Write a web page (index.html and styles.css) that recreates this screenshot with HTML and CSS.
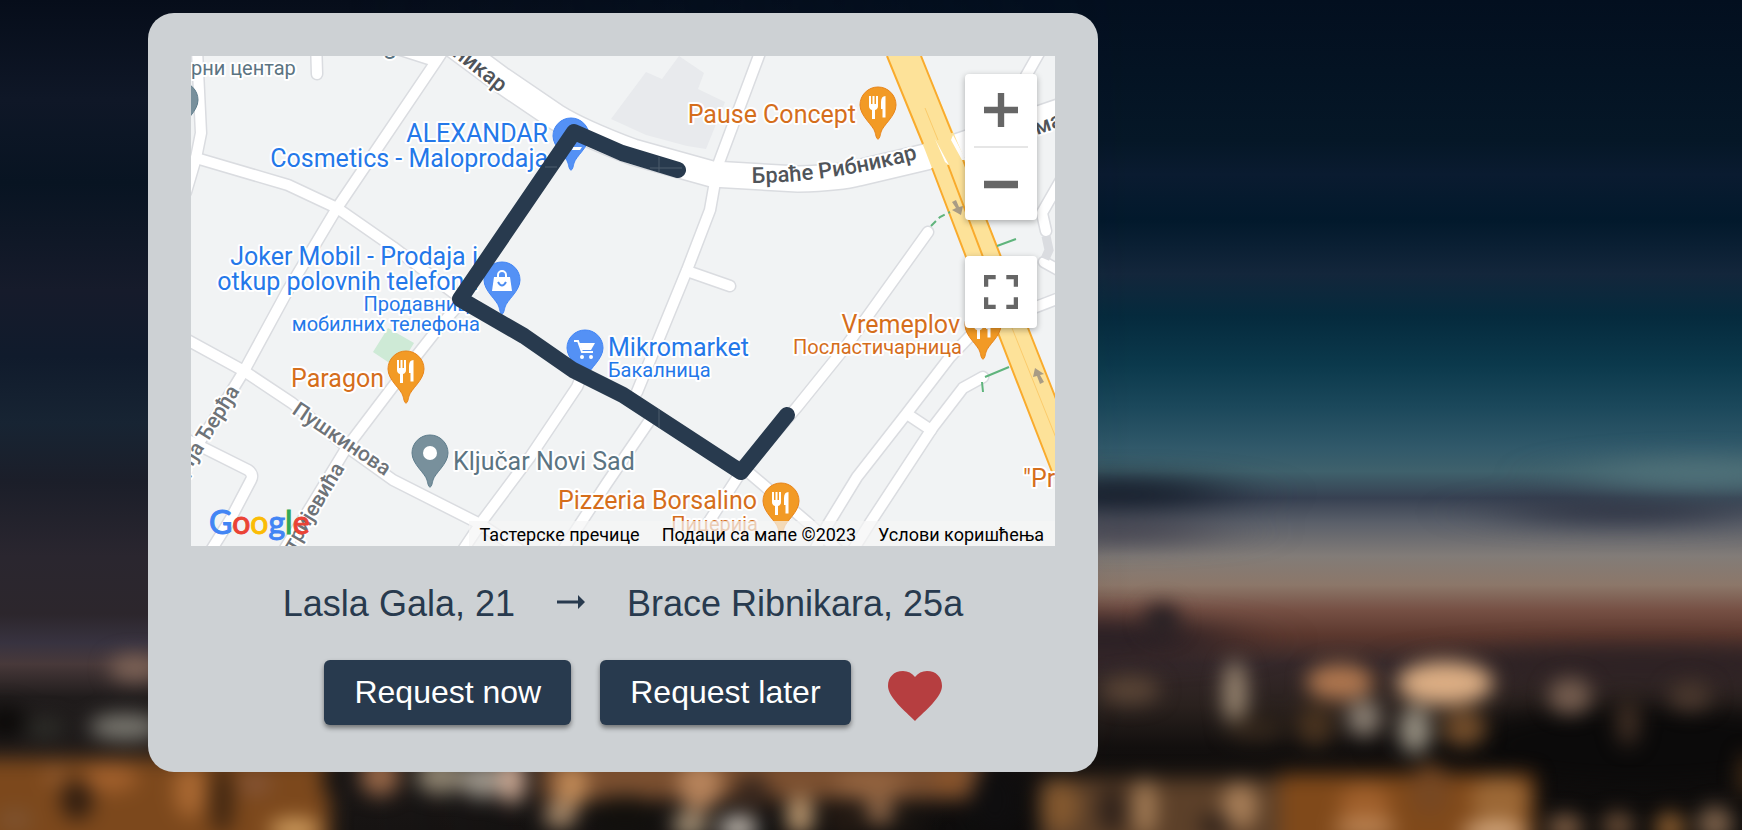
FILE: index.html
```html
<!DOCTYPE html>
<html lang="en">
<head>
<meta charset="utf-8">
<meta name="viewport" content="width=device-width, initial-scale=1">
<title>Request a ride</title>
<link rel="stylesheet" href="styles.css">
</head>
<body>
<svg class="backdrop" viewBox="0 0 1742 830" preserveAspectRatio="none" aria-hidden="true">
  <defs>
    <linearGradient id="dusk" x1="0" y1="0" x2="0" y2="1">
      <stop offset="0" stop-color="#060d1a"/><stop offset=".12" stop-color="#0f1727"/><stop offset=".22" stop-color="#081422"/>
      <stop offset=".35" stop-color="#161b2b"/><stop offset=".43" stop-color="#101b2c"/><stop offset=".51" stop-color="#172433"/>
      <stop offset=".58" stop-color="#1b1e29"/><stop offset=".67" stop-color="#2a262f"/><stop offset=".74" stop-color="#2c262c"/>
      <stop offset=".775" stop-color="#383340"/><stop offset=".8" stop-color="#48393a"/><stop offset=".84" stop-color="#201c1c"/>
      <stop offset="1" stop-color="#171413"/>
    </linearGradient>
    <linearGradient id="sky" x1="0" y1="0" x2="0" y2="1">
      <stop offset="0" stop-color="#030f1f"/><stop offset=".17" stop-color="#051727"/><stop offset=".21" stop-color="#0a1b30"/>
      <stop offset=".265" stop-color="#02192c"/><stop offset=".33" stop-color="#13263b"/><stop offset=".38" stop-color="#052a3d"/>
      <stop offset=".44" stop-color="#0b394c"/><stop offset=".49" stop-color="#1b485b"/><stop offset=".54" stop-color="#31596a"/>
      <stop offset=".568" stop-color="#3f616c"/><stop offset=".6" stop-color="#374152"/><stop offset=".63" stop-color="#5b606a"/>
      <stop offset=".67" stop-color="#827c78"/><stop offset=".705" stop-color="#8c7769"/><stop offset=".735" stop-color="#765044"/>
      <stop offset=".765" stop-color="#5c382e"/><stop offset=".8" stop-color="#35282a"/><stop offset=".85" stop-color="#2a211e"/>
      <stop offset=".9" stop-color="#120f0e"/><stop offset="1" stop-color="#0c0b0b"/>
    </linearGradient>
    <linearGradient id="fade" x1="0" y1="0" x2="1" y2="0" color-interpolation="sRGB">
      <stop offset=".2" stop-color="#000"/><stop offset=".65" stop-color="#fff"/>
    </linearGradient>
    <mask id="east"><rect width="1742" height="830" fill="url(#fade)"/></mask>
    <filter id="soft" x="-10%" y="-50%" width="120%" height="200%" color-interpolation-filters="sRGB"><feGaussianBlur stdDeviation="10"/></filter>
    <filter id="softer" x="-20%" y="-50%" width="140%" height="200%" color-interpolation-filters="sRGB"><feGaussianBlur stdDeviation="40 12"/></filter>
  </defs>
  <rect width="1742" height="830" fill="url(#dusk)"/>
  <rect width="1742" height="830" fill="url(#sky)" mask="url(#east)"/>
  <g filter="url(#softer)">
    <ellipse cx="1120" cy="493" rx="110" ry="16" fill="#161e2b"/>
    <ellipse cx="1620" cy="512" rx="120" ry="11" fill="#2b3040"/>
    <ellipse cx="1700" cy="475" rx="120" ry="16" fill="#50727a"/>
    <ellipse cx="1100" cy="640" rx="130" ry="22" fill="#2a2025"/>
    <ellipse cx="1120" cy="532" rx="100" ry="11" fill="#3f3e4b"/>
    <ellipse cx="1640" cy="664" rx="200" ry="16" fill="#2d2123"/>
    <ellipse cx="1640" cy="745" rx="200" ry="40" fill="#0b0a0a"/>
  </g>
  <g filter="url(#soft)">
    <ellipse cx="1162" cy="620" rx="18" ry="16" fill="#262024"/>
    <ellipse cx="1235" cy="694" rx="12" ry="34" fill="#9a8772"/>
    <ellipse cx="1340" cy="682" rx="34" ry="18" fill="#b0774f"/>
    <ellipse cx="1445" cy="683" rx="48" ry="22" fill="#dcae84"/>
    <ellipse cx="1364" cy="718" rx="17" ry="18" fill="#8b8074"/>
    <ellipse cx="1415" cy="730" rx="16" ry="24" fill="#968f81"/>
    <ellipse cx="1464" cy="728" rx="22" ry="18" fill="#744e2b"/>
    <ellipse cx="1315" cy="725" rx="18" ry="20" fill="#49331f"/>
    <ellipse cx="1570" cy="696" rx="22" ry="18" fill="#755d4f"/>
    <ellipse cx="1690" cy="696" rx="22" ry="15" fill="#4a382e"/>
    <ellipse cx="1628" cy="722" rx="12" ry="24" fill="#3f2e24"/>
    <ellipse cx="1130" cy="690" rx="30" ry="14" fill="#5a4536"/>
    <ellipse cx="1255" cy="728" rx="30" ry="12" fill="#33261b"/>
    <ellipse cx="135" cy="668" rx="26" ry="13" fill="#806558"/>
    <ellipse cx="125" cy="727" rx="36" ry="13" fill="#7c7a72"/>
    <ellipse cx="5" cy="722" rx="22" ry="16" fill="#0c0a09"/>
    <ellipse cx="45" cy="728" rx="20" ry="10" fill="#2e2e29"/>
    <rect x="-40" y="758" width="370" height="110" fill="#7c481c"/>
    <ellipse cx="110" cy="778" rx="28" ry="14" fill="#a2602c"/>
    <ellipse cx="55" cy="776" rx="12" ry="10" fill="#90592d"/>
    <ellipse cx="77" cy="800" rx="16" ry="20" fill="#301d10"/>
    <ellipse cx="15" cy="820" rx="18" ry="10" fill="#7d5432"/>
    <ellipse cx="190" cy="790" rx="16" ry="28" fill="#a96832"/>
    <ellipse cx="222" cy="800" rx="12" ry="36" fill="#402611"/>
    <ellipse cx="255" cy="784" rx="16" ry="10" fill="#85563a"/>
    <ellipse cx="295" cy="830" rx="26" ry="12" fill="#cf9d5f"/>
    <ellipse cx="334" cy="778" rx="12" ry="20" fill="#171413"/>
    <ellipse cx="380" cy="776" rx="20" ry="20" fill="#966647"/>
    <ellipse cx="440" cy="776" rx="24" ry="18" fill="#8e8370"/>
    <ellipse cx="482" cy="780" rx="22" ry="18" fill="#9c958a"/>
    <ellipse cx="512" cy="780" rx="14" ry="24" fill="#c9a691"/>
    <rect x="540" y="755" width="440" height="44" fill="#7c5030"/>
    <ellipse cx="572" cy="786" rx="16" ry="22" fill="#c28b58"/>
    <ellipse cx="560" cy="815" rx="16" ry="14" fill="#a78a6c"/>
    <ellipse cx="625" cy="815" rx="32" ry="20" fill="#12100d"/>
    <ellipse cx="700" cy="785" rx="22" ry="26" fill="#b6835b"/>
    <ellipse cx="690" cy="825" rx="18" ry="14" fill="#a28f75"/>
    <ellipse cx="752" cy="792" rx="18" ry="18" fill="#3a281e"/>
    <ellipse cx="738" cy="828" rx="20" ry="13" fill="#c0b8af"/>
    <ellipse cx="800" cy="816" rx="14" ry="20" fill="#bb9870"/>
    <ellipse cx="845" cy="822" rx="20" ry="12" fill="#281c14"/>
    <ellipse cx="870" cy="785" rx="36" ry="16" fill="#93633f"/>
    <ellipse cx="880" cy="812" rx="14" ry="14" fill="#8b6547"/>
    <ellipse cx="950" cy="780" rx="14" ry="14" fill="#8c552a"/>
    <ellipse cx="910" cy="822" rx="14" ry="12" fill="#1a1511"/>
    <ellipse cx="995" cy="800" rx="24" ry="34" fill="#0f0e0f"/>
    <rect x="1040" y="778" width="240" height="80" fill="#5c4029"/>
    <ellipse cx="1060" cy="806" rx="20" ry="26" fill="#83582f"/>
    <ellipse cx="1112" cy="810" rx="14" ry="24" fill="#30221a"/>
    <ellipse cx="1145" cy="808" rx="12" ry="30" fill="#a27b55"/>
    <ellipse cx="1240" cy="806" rx="18" ry="24" fill="#a67d57"/>
    <ellipse cx="1215" cy="826" rx="16" ry="12" fill="#30221a"/>
    <rect x="1280" y="774" width="254" height="84" fill="#80491a"/>
    <ellipse cx="1365" cy="805" rx="26" ry="20" fill="#a0602c"/>
    <ellipse cx="1365" cy="828" rx="32" ry="9" fill="#c08a5b"/>
    <ellipse cx="1430" cy="790" rx="20" ry="26" fill="#774822"/>
    <ellipse cx="1500" cy="800" rx="30" ry="22" fill="#9c6836"/>
    <ellipse cx="1495" cy="832" rx="34" ry="10" fill="#dbb188"/>
    <ellipse cx="1565" cy="828" rx="18" ry="14" fill="#7d5c42"/>
    <ellipse cx="1618" cy="826" rx="16" ry="14" fill="#6b4e37"/>
    <ellipse cx="1670" cy="828" rx="15" ry="16" fill="#8b5d2f"/>
    <ellipse cx="1715" cy="824" rx="18" ry="18" fill="#7b6049"/>
    <ellipse cx="1746" cy="775" rx="6" ry="22" fill="#5a3a1c"/>
  </g>
</svg>

<main class="card">
  <section class="map" aria-label="Route map">
    <svg class="map-canvas" viewBox="191 56 864 490" role="img" aria-label="Route from Lasla Gala to Brace Ribnikara">
      <defs>
        <path id="pin" d="M0 34C-1.500 34-2 31-3 27C-5 20-18 11-18 0A18 18 0 0 1 18 0C18 11 5 20 3 27C2 31 1.500 34 0 34Z"/>
        <g id="cutlery" fill="#fff">
          <path d="M-9-9h2v8h1.500v-8h2v8H-2v-8h2v10q0 3-3 4v9h-3v-9q-3-1-3-4Z"/>
          <path d="M3-3Q3-9 7.500-9V12.500h-3V4H3Z"/>
        </g>
        <g id="roads">
          <path d="M197 50L201 133L196 158L186 192"/>
          <path d="M316 40L317 74"/>
          <path d="M196 158L288 185L337 208L393 247L463 300"/>
          <path d="M385 45L432 60"/>
          <path d="M450 40L437 60L337 208L288 290L244 371L217 415L180 472"/>
          <path d="M764 42L718 165L710 210L687 270L637 392"/>
          <path d="M687 271L730 286"/>
          <path d="M650 420L607 483L563 550"/>
          <path d="M928 232L847 345L797 407L741 472L710 520L690 550"/>
          <path d="M741 466L807 522L838 550"/>
          <path d="M983 327L972 334L950 357L907 413L857 477L827 526L814 552"/>
          <path d="M983 377L963 388L933 427L870 523L853 550"/>
          <path d="M907 414L931 430"/>
          <path d="M180 336L244 371L292 403L347 447L393 480L480 524L520 550"/>
          <path d="M463 300L440 326L410 364L347 447L313 503L284 550"/>
          <path d="M580 380L577 387L530 457L483 520L463 550"/>
          <path d="M180 436L248 470Q254 474 251 480L230 520L210 552"/>
          <path d="M1043 46L1026 76L1000 130"/>
          <path d="M1062 178L1042 213L1046 231"/>
          <path d="M1044 262L1062 272"/>
          <path d="M1010 317L1062 297"/>
        </g>
        <path id="avenue" d="M450 42L500 79L556 117Q580 132 633 152L712 174L798 179Q840 178 858 173L930 156L1062 111"/>
        <path id="lbl-ribnikar" d="M752 183C800 183 860 176 935 154"/>
      </defs>

      <rect class="land" x="191" y="56" width="864" height="490"/>
      <path fill="#e8eaed" d="M611 119L646 72L662 79L679 56L704 73L698 89L725 102L706 149L687 146L646 135Z"/>
      <path fill="#ceead6" d="M373 352L388 328L414 343L400 366L388 362Z"/>

      <use href="#roads" class="road-edge"/>
      <use href="#avenue" class="avenue-edge"/>
      <use href="#roads" class="road"/>
      <use href="#avenue" class="avenue"/>
      <path d="M1046 236L1049 250L1045 259" fill="none" stroke="#dadce0" stroke-width="9"/>

      <path fill="#fde299" d="M887 56H921L965 160L1001 257L1028 328L1060 410V492L998 333L966 257L925 150Z"/>
      <g class="highway-line">
        <path d="M887 56L923 144M932 168L966 257L998 333L1054 477"/>
        <path d="M921 56L952 133M963 160L1001 257L1028 328L1058 404"/>
        <path d="M948 165L983 257L1000 300"/>
        <path class="thin" d="M1000 300L1012 328L1056 438M925 108L938 140"/>
      </g>
      <path fill="#fff" d="M935 139L949 165L945 162ZM953 135L966 160H962L951 140Z"/>
      <g fill="none" stroke="#5fb47c" stroke-width="2">
        <path d="M931 226L940 217L950 212" stroke-dasharray="7 4"/>
        <path d="M997 246L1016 239M985 377L1009 367M982 382L983 392"/>
      </g>
      <g fill="#a99c85">
        <path d="M952 202L956 200L959 207L963 206L961 215L952 210L956 208Z"/>
        <path d="M1044 382L1040 384L1037 376L1033 377L1035 368L1044 374L1040 375Z"/>
      </g>

      <use href="#pin" x="571" y="136" class="pin-blue"/>
      <path fill="#fff" d="M573 147h9l-2 3h-8Z"/>
      <use href="#pin" x="502" y="280" class="pin-blue"/>
      <g transform="translate(502 280)"><path fill="#fff" d="M-8-3H8L10 11H-10Z"/><path d="M-4-3V-5a4 4 0 0 1 8 0v2" fill="none" stroke="#fff" stroke-width="2"/><path d="M-4 2q4 7 8 0" fill="none" stroke="#4d8df0" stroke-width="2"/></g>
      <use href="#pin" x="585" y="348" class="pin-blue"/>
      <g transform="translate(585 348)"><path d="M-11-7h4L-3 4H8" fill="none" stroke="#fff" stroke-width="2"/><path fill="#fff" d="M-6-5H10L6 2H-3Z"/><circle cx="-3" cy="9" r="2" fill="#fff"/><circle cx="6" cy="9" r="2" fill="#fff"/></g>
      <use href="#pin" x="878" y="105" class="pin-orange"/><use href="#cutlery" x="878" y="105"/>
      <use href="#pin" x="406" y="369" class="pin-orange"/><use href="#cutlery" x="406" y="369"/>
      <use href="#pin" x="983" y="325" class="pin-orange"/><use href="#cutlery" x="983" y="325"/>
      <use href="#pin" x="781" y="501" class="pin-orange"/><use href="#cutlery" x="781" y="501"/>
      <use href="#pin" x="430" y="453" class="pin-slate"/><circle cx="430" cy="453" r="7" fill="#fff"/>
      <use href="#pin" x="180" y="100" class="pin-slate"/>

      <g class="street">
        <text class="strong" text-anchor="end" transform="translate(500 93) rotate(38)">Рибникар</text>
        <text class="strong"><textPath href="#lbl-ribnikar">Браће Рибникар</textPath></text>
        <text class="strong" transform="translate(1037 135) rotate(-19)">ма</text>
        <text class="soft" transform="translate(291 413) rotate(34)">Пушкинова</text>
        <text class="soft" text-anchor="end" transform="translate(240 391) rotate(-58)">Карађорђа Ђерђа</text>
        <text class="soft" text-anchor="end" transform="translate(345 468) rotate(-59)">Димитријевића</text>
      </g>
      <g class="poi slate">
        <text class="small" x="191" y="75">рни центар</text>
        <text x="383" y="54">g</text>
        <text x="453" y="470">Ključar Novi Sad</text>
      </g>
      <g class="poi blue">
        <text x="548" y="142" text-anchor="end">ALEXANDAR</text>
        <text x="548" y="167" text-anchor="end">Cosmetics - Maloprodaja</text>
        <text x="478" y="265" text-anchor="end">Joker Mobil - Prodaja i</text>
        <text x="478" y="290" text-anchor="end">otkup polovnih telefona</text>
        <text class="small" x="480" y="311" text-anchor="end">Продавница</text>
        <text class="small" x="480" y="331" text-anchor="end">мобилних телефона</text>
        <text x="608" y="356">Mikromarket</text>
        <text class="small" x="608" y="377">Бакалница</text>
      </g>
      <g class="poi orange">
        <text x="856" y="123" text-anchor="end">Pause Concept</text>
        <text x="384" y="387" text-anchor="end">Paragon</text>
        <text x="960" y="333" text-anchor="end">Vremeplov</text>
        <text class="small" x="962" y="354" text-anchor="end">Посластичарница</text>
        <text x="757" y="509" text-anchor="end">Pizzeria Borsalino</text>
        <text class="small" x="758" y="531" text-anchor="end">Пицерија</text>
        <text x="1023" y="487">"Pr</text>
      </g>

      <path class="route" d="M678 170L622 153L574 132L460 299L524 336L573 370L623 395L741 472L787 415"/>
      <path class="seam" d="M659 157V172M650 168H682M659 409V428M545 167H557"/>
    </svg>

    <a class="google" href="#google" aria-label="Google"><span class="b">G</span><span class="r">o</span><span class="y">o</span><span class="b">g</span><span class="g">l</span><span class="r">e</span></a>

    <div class="controls">
      <div class="zoom">
        <button type="button" aria-label="Zoom in"><svg viewBox="0 0 32 32"><path d="M13 0h6v13h13v6H19v13h-6V19H0v-6h13Z"/></svg></button>
        <button type="button" aria-label="Zoom out"><svg viewBox="0 0 32 32"><path d="M0 13h32v7H0Z"/></svg></button>
      </div>
      <button type="button" class="fullscreen" aria-label="Full screen"><svg viewBox="0 0 32 32"><path d="M0 0H11V4H4V11H0ZM21 0H32V11H28V4H21ZM0 21H4V28H11V32H0ZM28 21H32V32H21V28H28Z"/></svg></button>
    </div>

    <div class="legal">
      <button type="button">Тастерске пречице</button>
      <span>Подаци са мапе ©2023</span>
      <a href="#terms">Услови коришћења</a>
    </div>
  </section>

  <h1 class="trip">
    <span>Lasla Gala, 21</span>
    <svg class="arrow" viewBox="0 0 28 14" aria-label="to"><path d="M0 5.500H21V0L28 7L21 14V8.500H0Z"/></svg>
    <span>Brace Ribnikara, 25a</span>
  </h1>

  <div class="actions">
    <button type="button" class="request">Request now</button>
    <button type="button" class="request">Request later</button>
    <button type="button" class="favorite" aria-label="Add to favorites"><svg viewBox="0 0 54 50"><path d="M27 50C17 40 0 26 0 15C0 6 6 0 15 0C20 0 24 2 27 6C30 2 34 0 39 0C48 0 54 6 54 15C54 26 37 40 27 50Z"/></svg></button>
  </div>
</main>
</body>
</html>
```
FILE: styles.css
```css
* { box-sizing: border-box; }

body {
  margin: 0;
  min-height: 100vh;
  background: #0c0b0b;
  font-family: "Liberation Sans", Arial, sans-serif;
  color: #283a4e;
}

button {
  border: 0;
  padding: 0;
  background: none;
  font: inherit;
  color: inherit;
  cursor: pointer;
}

.backdrop {
  position: fixed;
  inset: 0;
  width: 100%;
  height: 100%;
  z-index: -1;
}

.card {
  max-width: 950px;
  margin: 13px 0 58px 148px;
  padding: 43px 43px 47px;
  border-radius: 26px;
  background: #cdd1d4;
}

/* map */
.map {
  position: relative;
  overflow: hidden;
  font-family: Roboto, sans-serif;
}

.map-canvas { display: block; width: 100%; }

.land { fill: #f1f3f4; }

.road-edge, .road, .avenue-edge, .avenue {
  fill: none;
  stroke-linecap: round;
  stroke-linejoin: round;
}

.road-edge { stroke: #dadce0; stroke-width: 13px; }
.road { stroke: #fff; stroke-width: 10px; }
.avenue-edge { stroke: #dadce0; stroke-width: 28px; }
.avenue { stroke: #fff; stroke-width: 25px; }

.highway-line { fill: none; stroke: #f9ab2d; stroke-width: 2px; }
.thin { stroke: #fbcb6b; stroke-width: 1px; }

.pin-blue { fill: #5491f5; stroke: #4285f4; }
.pin-orange { fill: #f29a25; stroke: #e8851c; }
.pin-slate { fill: #78909c; stroke: #5f7d8c; }

.street, .poi {
  paint-order: stroke;
  stroke: #fff;
  stroke-width: 4px;
  stroke-linejoin: round;
}

.street { font-size: 21px; font-weight: 500; fill: #505459; }
.street .strong { font-size: 22px; }
.street .soft { fill: #6e7378; }
.poi { font-size: 25px; }
.poi .small { font-size: 20px; }
.blue { fill: #2478e9; }
.orange { fill: #d56e1c; }
.slate { fill: #5b7482; }

.route {
  fill: none;
  stroke: #283a4e;
  stroke-width: 16px;
  stroke-linecap: round;
  stroke-linejoin: round;
}

.seam { fill: none; stroke: #4d5d6d; stroke-width: 1px; }

.google {
  position: absolute;
  left: 18px;
  bottom: 4px;
  font-family: Lato, sans-serif;
  font-size: 32px;
  line-height: 40px;
  text-decoration: none;
  -webkit-text-stroke: 1px currentColor;
}

.google .b { color: #4285f4; }
.google .r { color: #ea4335; }
.google .y { color: #fbbc05; }
.google .g { color: #34a853; }

.controls {
  position: absolute;
  top: 18px;
  right: 18px;
  display: grid;
  gap: 36px;
}

.zoom, .fullscreen {
  width: 72px;
  border-radius: 4px;
  background: #fff;
  box-shadow: 0 2px 6px rgba(0, 0, 0, .3);
}

.zoom button, .fullscreen {
  display: grid;
  place-items: center;
  height: 72px;
}

.zoom button { width: 54px; margin: 0 auto; }
.zoom button + button { border-top: 2px solid #e6e6e6; height: 74px; }

.controls svg { width: 34px; height: 34px; fill: #666; }

.legal {
  position: absolute;
  right: 0;
  bottom: 0;
  display: flex;
  font-size: 18px;
  line-height: 23px;
  color: #000;
}

.legal > * {
  padding: 2px 11px 0;
  background: rgba(245, 245, 245, .7);
  color: #000;
  text-decoration: none;
  white-space: nowrap;
}

/* trip summary */
.trip {
  display: flex;
  flex-wrap: wrap;
  align-items: center;
  justify-content: center;
  gap: 42px;
  margin: 37px 0 0;
  font-size: 36px;
  font-weight: 400;
  line-height: 42px;
}

.arrow { width: 28px; height: 14px; margin-bottom: 4px; fill: #283a4e; }

.actions {
  display: flex;
  flex-wrap: wrap;
  align-items: center;
  justify-content: center;
  gap: 29px;
  margin-top: 35px;
  padding-left: 20px;
}

.request {
  padding: 14px 30px;
  border-radius: 6px;
  background: #283a4e;
  box-shadow: 0 3px 5px rgba(0, 0, 0, .45);
  font-size: 32px;
  line-height: 37px;
  color: #fff;
}

.favorite { margin-left: 8px; }
.favorite svg { display: block; width: 54px; height: 50px; margin-top: 7px; fill: #b63e40; }
```
